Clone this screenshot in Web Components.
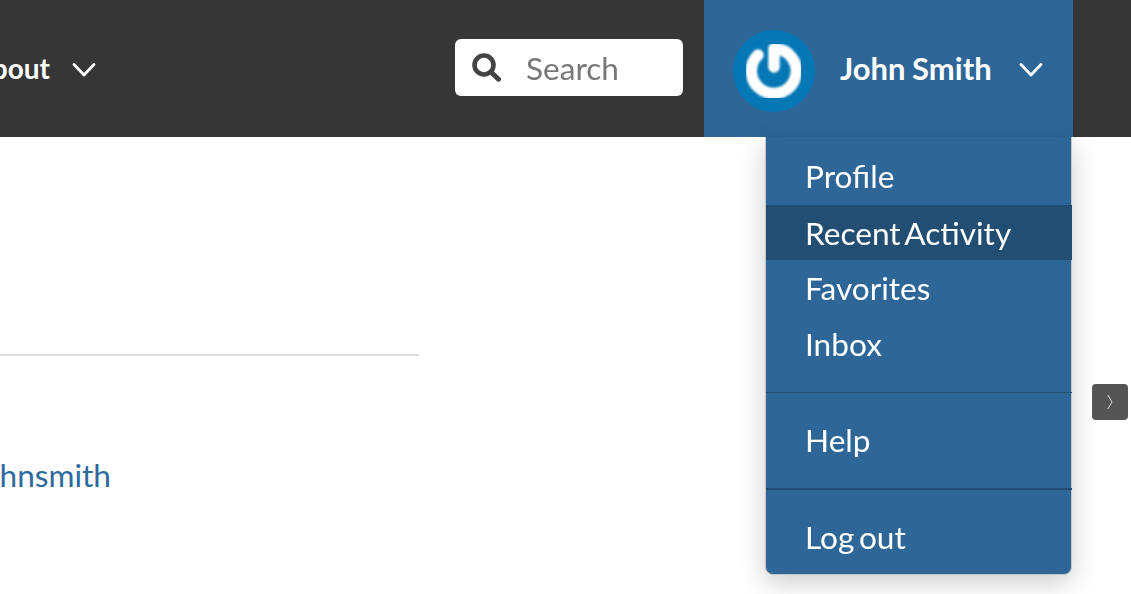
<!DOCTYPE html>
<html lang="en">
<head>
<meta charset="utf-8">
<title>Profile</title>
<style>
  html, body { margin: 0; height: 100%; overflow: hidden; background: #fff; }
  body { font-family: Lato, "Liberation Sans", sans-serif; }
</style>
</head>
<body>
<site-header>
  <nav-link slot="nav">About</nav-link>
  <search-box slot="search"></search-box>
  <user-menu slot="user" name="John Smith">
    <menu-group>
      <menu-item>Profile</menu-item>
      <menu-item active>Recent Activity</menu-item>
      <menu-item>Favorites</menu-item>
      <menu-item>Inbox</menu-item>
    </menu-group>
    <menu-group>
      <menu-item>Help</menu-item>
    </menu-group>
    <menu-group>
      <menu-item>Log out</menu-item>
    </menu-group>
  </user-menu>
</site-header>
<profile-content username="johnsmith"></profile-content>
<side-tab></side-tab>

<script>
const CHEVRON = `<svg width="24" height="16" viewBox="0 0 24 16" fill="none" stroke="#fff" stroke-width="2.8" stroke-linecap="round" stroke-linejoin="round"><path d="M2 2.5 12 13 22 2.5"/></svg>`;

class SiteHeader extends HTMLElement {
  constructor() {
    super();
    this.attachShadow({ mode: 'open' });
    this.shadowRoot.innerHTML = `
      <style>
        :host {
          display: flex;
          justify-content: flex-end;
          height: 137px;
          padding-right: 58px;
          background: #363636;
        }
        .nav { display: flex; align-items: center; margin-right: 359px; flex: none; }
        .search { display: flex; align-items: center; margin: 0 21px 2px 0; flex: none; }
        .user { display: flex; flex: none; }
      </style>
      <div class="nav"><slot name="nav"></slot></div>
      <div class="search"><slot name="search"></slot></div>
      <div class="user"><slot name="user"></slot></div>
    `;
  }
}

class NavLink extends HTMLElement {
  constructor() {
    super();
    this.attachShadow({ mode: 'open' });
    this.shadowRoot.innerHTML = `
      <style>
        :host {
          display: flex;
          align-items: center;
          gap: 22px;
          color: #fff;
          font-size: 28px;
          font-weight: 700;
          white-space: nowrap;
        }
        span { margin-bottom: 2px; }
        svg { display: block; margin-top: 3px; }
      </style>
      <span><slot></slot></span>${CHEVRON}
    `;
  }
}

class SearchBox extends HTMLElement {
  constructor() {
    super();
    this.attachShadow({ mode: 'open' });
    this.shadowRoot.innerHTML = `
      <style>
        :host {
          display: flex;
          align-items: center;
          box-sizing: border-box;
          width: 228px;
          height: 57px;
          padding-left: 17px;
          gap: 25px;
          border-radius: 6px;
          background: #fff;
          color: #777;
          font-size: 31.6px;
        }
        svg { display: block; flex: none; }
        span { will-change: transform; }
      </style>
      <svg width="29" height="29" viewBox="0 0 29 29" fill="none" stroke="#444" stroke-linecap="round">
        <circle cx="12" cy="12" r="9.5" stroke-width="4.6"/>
        <path d="M19.5 19.5 26.5 26.2" stroke-width="5"/>
      </svg>
      <span>Search</span>
    `;
  }
}

class UserMenu extends HTMLElement {
  constructor() {
    super();
    this.attachShadow({ mode: 'open' });
    this.shadowRoot.innerHTML = `
      <style>
        :host {
          display: flex;
          align-items: center;
          position: relative;
          box-sizing: border-box;
          width: 369px;
          height: 137px;
          padding-left: 29px;
          background: #2d6697;
          color: #fff;
          font-size: 31px;
          font-weight: 700;
          white-space: nowrap;
        }
        .avatar { display: block; flex: none; margin-top: 5px; }
        .name { margin-left: 25px; margin-right: 27px; margin-bottom: 2px; word-spacing: -1px; }
        .caret { display: block; margin-top: 3px; }
        .caret svg { display: block; }
        .menu {
          position: absolute;
          top: 137px;
          left: 61px;
          box-sizing: border-box;
          width: 307px;
          height: 438px;
          border: 1px solid #c6c6c6;
          border-top: 0;
          border-radius: 0 0 8px 8px;
          background: #2d6697;
          box-shadow: 0 8px 26px rgba(0, 0, 0, .2);
          font-size: 31.6px;
          font-weight: 400;
          word-spacing: -3.5px;
        }
      </style>
      <svg class="avatar" width="82" height="82" viewBox="0 0 82 82">
        <defs><filter id="soft" x="-10%" y="-10%" width="120%" height="120%"><feGaussianBlur stdDeviation="1"/></filter></defs>
        <circle cx="41" cy="41" r="41" fill="#0477b4"/>
        <path d="M25 25A22.5 22.5 0 1 0 41 18.5V37" fill="none" stroke="#fff" stroke-width="11.5" stroke-linecap="round" stroke-linejoin="round" filter="url(#soft)"/>
      </svg>
      <span class="name"></span>
      <span class="caret">${CHEVRON}</span>
      <div class="menu"><slot></slot></div>
    `;
    this.shadowRoot.querySelector('.name').textContent = this.getAttribute('name');
  }
}

class MenuGroup extends HTMLElement {
  constructor() {
    super();
    this.attachShadow({ mode: 'open' });
    this.shadowRoot.innerHTML = `
      <style>
        :host {
          display: block;
          margin-right: -1px;
          padding: 12px 0 19px;
          border-bottom: 1px solid #234e74;
        }
        :host(:nth-child(2)) { padding: 20px 0 19px; border-bottom-width: 2px; }
        :host(:last-child) { padding: 20px 0 0; border-bottom: 0; }
      </style>
      <slot></slot>
    `;
  }
}

class MenuItem extends HTMLElement {
  constructor() {
    super();
    this.attachShadow({ mode: 'open' });
    this.shadowRoot.innerHTML = `
      <style>
        :host {
          display: flex;
          align-items: center;
          box-sizing: border-box;
          height: 56px;
          padding: 0 0 3px 38.5px;
        }
        :host([active]) { background: #234e74; height: 55px; margin-bottom: 1px; padding-bottom: 0; }
        span { will-change: transform; }
      </style>
      <span><slot></slot></span>
    `;
  }
}

class ProfileContent extends HTMLElement {
  constructor() {
    super();
    this.attachShadow({ mode: 'open' });
    this.shadowRoot.innerHTML = `
      <style>
        :host {
          display: block;
          width: 419px;
          padding-top: 217px;
          overflow: hidden;
        }
        hr { height: 2px; margin: 0; border: 0; background: #ddd; }
        a {
          display: block;
          margin: 101px 0 0 -26px;
          color: #2d6a9f;
          font-size: 31.6px;
          line-height: 36px;
          text-decoration: none;
        }
      </style>
      <hr>
      <a href="#"></a>
    `;
    this.shadowRoot.querySelector('a').textContent = this.getAttribute('username');
  }
}

class SideTab extends HTMLElement {
  constructor() {
    super();
    this.attachShadow({ mode: 'open' });
    this.shadowRoot.innerHTML = `
      <style>
        :host {
          position: absolute;
          top: 384px;
          left: 1092px;
          display: flex;
          align-items: center;
          justify-content: center;
          width: 36px;
          height: 36px;
          border-radius: 4px;
          background: #555;
        }
        svg { display: block; }
      </style>
      <svg width="6" height="16" viewBox="0 0 6 16" fill="none" stroke="#ddd" stroke-width="1"><path d="M.8 1 5 8 .8 15"/></svg>
    `;
  }
}

customElements.define('site-header', SiteHeader);
customElements.define('nav-link', NavLink);
customElements.define('search-box', SearchBox);
customElements.define('user-menu', UserMenu);
customElements.define('menu-group', MenuGroup);
customElements.define('menu-item', MenuItem);
customElements.define('profile-content', ProfileContent);
customElements.define('side-tab', SideTab);
</script>
</body>
</html>
